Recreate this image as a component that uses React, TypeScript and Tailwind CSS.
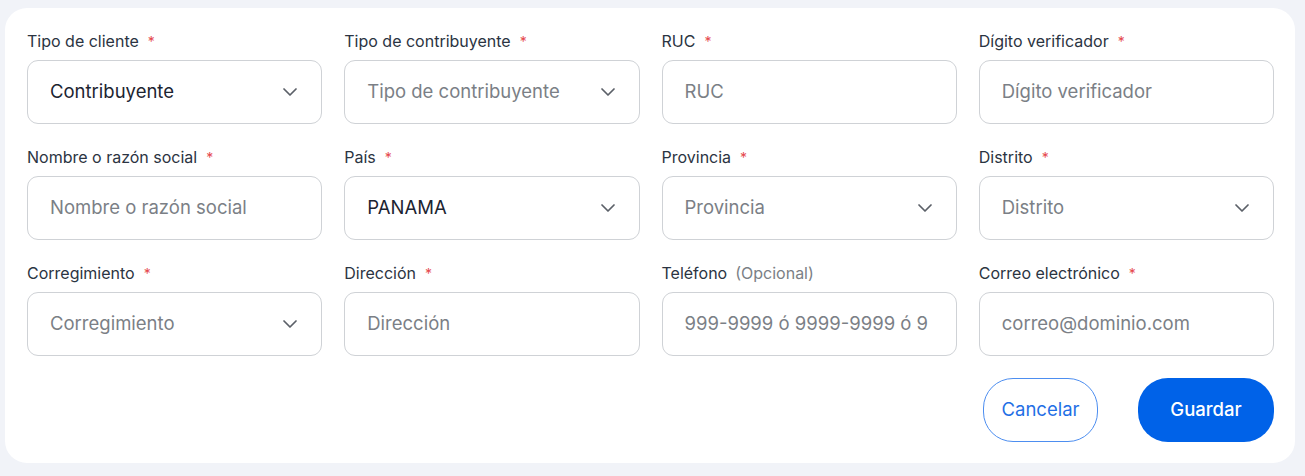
import { ChevronDown } from "lucide-react";

type Field = {
  label: string;
  required?: boolean;
  optional?: boolean;
  select?: boolean;
  value?: string;
  placeholder: string;
};

const FIELDS: Field[] = [
  { label: "Tipo de cliente", required: true, select: true, value: "Contribuyente", placeholder: "Tipo de cliente" },
  { label: "Tipo de contribuyente", required: true, select: true, placeholder: "Tipo de contribuyente" },
  { label: "RUC", required: true, placeholder: "RUC" },
  { label: "Dígito verificador", required: true, placeholder: "Dígito verificador" },
  { label: "Nombre o razón social", required: true, placeholder: "Nombre o razón social" },
  { label: "País", required: true, select: true, value: "PANAMA", placeholder: "País" },
  { label: "Provincia", required: true, select: true, placeholder: "Provincia" },
  { label: "Distrito", required: true, select: true, placeholder: "Distrito" },
  { label: "Corregimiento", required: true, select: true, placeholder: "Corregimiento" },
  { label: "Dirección", required: true, placeholder: "Dirección" },
  { label: "Teléfono", optional: true, placeholder: "999-9999 ó 9999-9999 ó 9" },
  { label: "Correo electrónico", required: true, placeholder: "correo@dominio.com" },
];

function FormField({ label, required, optional, select, value, placeholder }: Field) {
  return (
    <div className="flex flex-col">
      <label className="flex items-center h-[20px] mb-[9px] text-[16px] text-[#2b3442]">
        {label}
        {required && <span className="ml-[9px] text-[#e5484d] text-[14px]">*</span>}
        {optional && <span className="ml-[8px] text-[#7b7f86]">(Opcional)</span>}
      </label>
      <div className="flex items-center h-[64px] rounded-[11px] border border-[#cfd2d6] bg-white pl-[22px] pr-[19px]">
        <span
          className={`flex-1 truncate text-[18.5px] ${value ? "text-[#1c2431]" : "text-[#7b7f86]"}`}
        >
          {value ?? placeholder}
        </span>
        {select && <ChevronDown className="w-[24px] h-[24px] text-[#5b6068] ml-2" strokeWidth={1.75} />}
      </div>
    </div>
  );
}

export default function App() {
  return (
    <div
      className="w-[1305px] h-[476px] bg-[#f1f3f8] pl-[5px] pr-[10px] pt-[8px]"
      style={{ fontFamily: "Inter, 'Noto Sans', sans-serif" }}
    >
      <div className="bg-white rounded-[22px] h-[455px] pl-[22px] pr-[21px] pt-[23px]">
        <div className="grid grid-cols-4 gap-x-[22px] gap-y-[23px]">
          {FIELDS.map((f) => (
            <FormField key={f.label} {...f} />
          ))}
        </div>
        <div className="flex justify-end gap-[40px] mt-[22px]">
          <button className="h-[64px] w-[115px] rounded-[30px] border border-[#4d8ef0] text-[#1f6fe5] text-[18.5px] bg-white">
            Cancelar
          </button>
          <button className="h-[64px] w-[136px] rounded-[30px] bg-[#0062e8] text-white text-[18.5px] font-medium">
            Guardar
          </button>
        </div>
      </div>
    </div>
  );
}
